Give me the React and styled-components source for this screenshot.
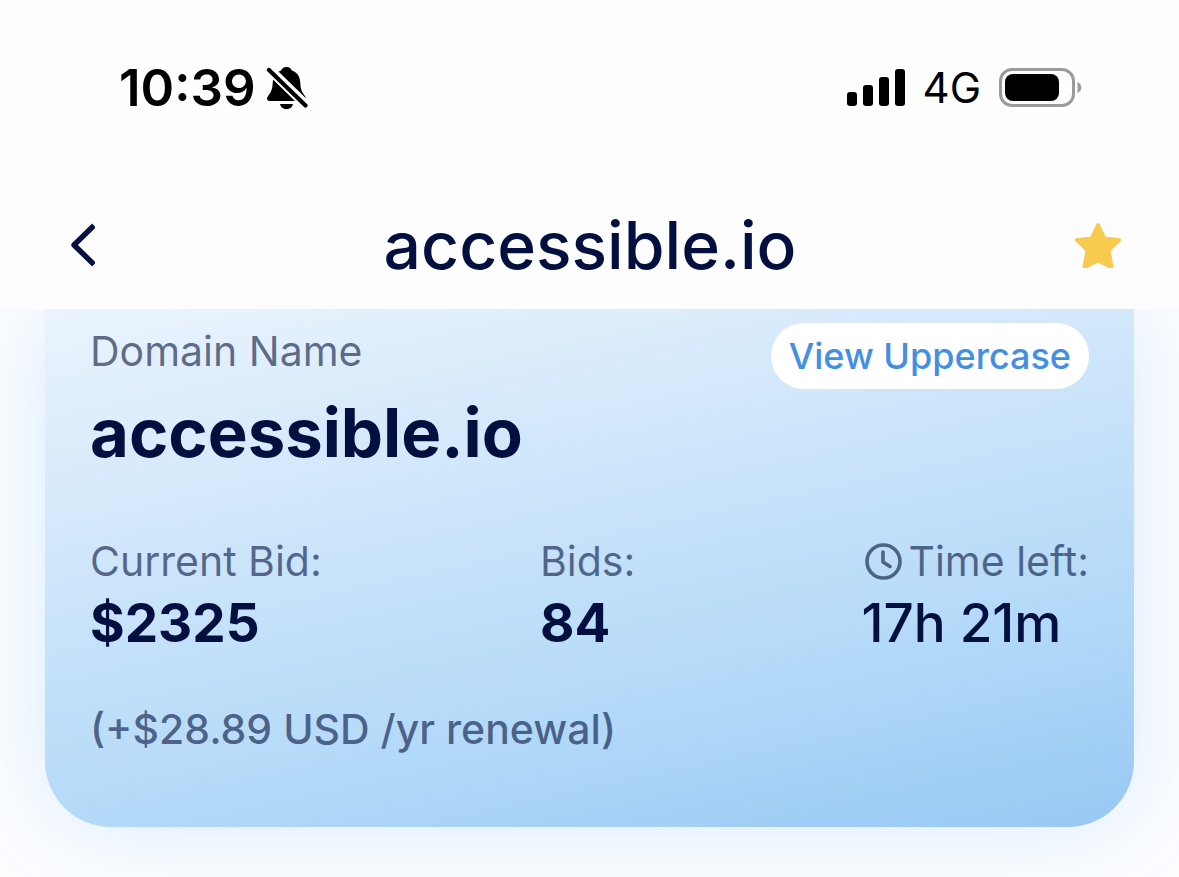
import React from 'react';
import styled, { createGlobalStyle } from 'styled-components';

const GlobalStyle = createGlobalStyle`
  * {
    box-sizing: border-box;
  }
  body {
    margin: 0;
    background-color: #fcfdff;
    font-family: Inter, "Liberation Sans", sans-serif;
    color: #03103f;
  }
`

const Screen = styled.div`
  min-height: 100vh;
  overflow: hidden;
`

const Top = styled.div`
  position: relative;
  z-index: 1;
  background: linear-gradient(#fefefe, #fdfdff);
`

const StatusBar = styled.div`
  display: flex;
  justify-content: space-between;
  align-items: center;
  height: 176px;
  padding: 0 97px 0 119px;
  color: #000;
`

const StatusGroup = styled.div`
  display: flex;
  align-items: center;
  gap: ${props => props.$gap};
`

const Clock = styled.span`
  font-size: 51px;
  line-height: 60px;
  font-weight: 600;
`

const Network = styled.span`
  font-size: 42px;
  line-height: 60px;
`

const Header = styled.header`
  display: grid;
  grid-template-columns: 48px 1fr 48px;
  align-items: center;
  height: 133px;
  padding: 4px 57px 0 58px;
`

const Title = styled.h1`
  margin: 0;
  text-align: center;
  font-size: 66px;
  line-height: 80px;
  font-weight: 500;
`

const IconButton = styled.button`
  display: flex;
  justify-content: center;
  padding: 0;
  border: 0;
  background: none;
  color: inherit;
`

const Card = styled.main`
  margin: 0 45px 50px;
  padding: 14px 45px 70px;
  border-radius: 0 0 66px 66px;
  background: linear-gradient(168deg, #ebf4fd 0%, #cbe4fa 40%, #b3d9f8 70%, #97c8f4 100%);
  box-shadow: 0 0 90px rgba(60, 155, 245, 0.18);
`

const CardTop = styled.div`
  display: flex;
  justify-content: space-between;
  align-items: flex-start;
`

const Label = styled.div`
  display: flex;
  align-items: center;
  gap: 6px;
  font-size: 41px;
  line-height: 56px;
  font-weight: ${props => props.$weight || 400};
  color: rgba(3, 16, 63, 0.6);
`

const TimeLabel = styled(Label)`
  padding-left: 4px;
`

const CaseButton = styled.button`
  height: 66px;
  padding: 0 18px;
  border: 0;
  border-radius: 33px;
  background-color: #fff;
  color: #438fe3;
  font-family: inherit;
  font-size: 36px;
  line-height: 44px;
  font-weight: 500;
`

const DomainName = styled.h2`
  margin: 4px 0 60px;
  font-size: 67px;
  line-height: 80px;
  font-weight: 700;
`

const Stats = styled.div`
  display: grid;
  grid-template-columns: 7fr 5fr auto;
  margin-bottom: 44px;
`

const Value = styled.div`
  font-size: 53px;
  line-height: 68px;
  font-weight: ${props => props.$weight || 700};
`

const BellOff = () => (
  <svg width="42" height="44" viewBox="0 0 42 44" aria-hidden="true">
    <path d="M20.500 1c3 0 4.700 1.600 5.400 3.600 5.200 1.800 8 6 8.300 11.400.3 6 1.200 9 3 11.600 1.400 2 2.800 3.600 2.800 5 0 1.500-1 2.400-2.800 2.400H3.800C2 35 1 34.100 1 32.600c0-1.400 1.400-3 2.800-5 1.800-2.600 2.700-5.600 3-11.600.3-5.400 3.100-9.600 8.300-11.400C15.800 2.600 17.500 1 20.500 1z" fill="#000" />
    <path d="M14 38h13c-.6 3-3 5.200-6.500 5.200S14.600 41 14 38z" fill="#000" />
    <path d="M1 1l41 40" stroke="#fefefe" strokeWidth="9.500" />
    <path d="M3 4l36.500 35.500" stroke="#000" strokeWidth="4.200" strokeLinecap="round" />
  </svg>
)

const Signal = () => (
  <svg width="58" height="38" viewBox="0 0 58 38" aria-hidden="true">
    <rect x="0" y="23" width="10" height="14" rx="3" />
    <rect x="16" y="16" width="10" height="21" rx="3" />
    <rect x="32" y="8" width="10" height="29" rx="3" />
    <rect x="48" y="0" width="10" height="37" rx="3" />
  </svg>
)

const Battery = () => (
  <svg width="83" height="40" viewBox="0 0 83 40" aria-hidden="true">
    <rect x="1.500" y="1.500" width="73" height="36" rx="11.500" fill="none" stroke="#9b9b9b" strokeWidth="3" />
    <rect x="6" y="6" width="54" height="27" rx="8" />
    <path d="M78.500 14c2.400 1 3.800 3 3.800 5.500s-1.400 4.500-3.800 5.500z" fill="#9b9b9b" />
  </svg>
)

const Chevron = () => (
  <svg width="26" height="44" viewBox="0 0 26 44" aria-hidden="true">
    <path d="M25 2.500L5 22l20 19.500" fill="none" stroke="currentColor" strokeWidth="5.400" strokeLinejoin="round" />
  </svg>
)

const Star = () => (
  <svg width="48" height="46" viewBox="0 0 48 46" aria-hidden="true">
    <path d="M24 3l6.200 13.400L45 18 34.500 28l3 17L24 38.500 10.500 45l3-17L3 18l14.800-1.600z" fill="#f7cb4f" stroke="#f7cb4f" strokeWidth="4" strokeLinejoin="round" />
  </svg>
)

const TimeIcon = () => (
  <svg width="37" height="37" viewBox="0 0 37 37" fill="none" stroke="currentColor" strokeWidth="3.600" strokeLinecap="round" strokeLinejoin="round" aria-hidden="true">
    <circle cx="18.500" cy="18.500" r="16.500" />
    <path d="M18 9v10l7 4.500" />
  </svg>
)

const App = () => {
  return (
    <Screen>
      <GlobalStyle />
      <Top>
        <StatusBar>
          <StatusGroup $gap="10px">
            <Clock>10:39</Clock>
            <BellOff />
          </StatusGroup>
          <StatusGroup $gap="18px">
            <Signal />
            <Network>4G</Network>
            <Battery />
          </StatusGroup>
        </StatusBar>
        <Header>
          <IconButton aria-label="Back"><Chevron /></IconButton>
          <Title>accessible.io</Title>
          <IconButton aria-label="Favorite"><Star /></IconButton>
        </Header>
      </Top>
      <Card>
        <CardTop>
          <Label>Domain Name</Label>
          <CaseButton>View Uppercase</CaseButton>
        </CardTop>
        <DomainName>accessible.io</DomainName>
        <Stats>
          <div>
            <Label>Current Bid:</Label>
            <Value>$2325</Value>
          </div>
          <div>
            <Label>Bids:</Label>
            <Value>84</Value>
          </div>
          <div>
            <TimeLabel><TimeIcon />Time left:</TimeLabel>
            <Value $weight={500}>17h 21m</Value>
          </div>
        </Stats>
        <Label $weight={500}>(+$28.89 USD /yr renewal)</Label>
      </Card>
    </Screen>
  )
}

export default App;
